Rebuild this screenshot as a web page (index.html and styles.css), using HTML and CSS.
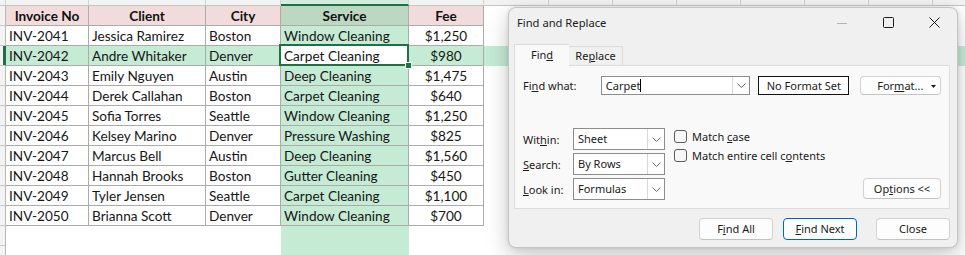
FILE: index.html
```html
<!DOCTYPE html>
<html>
<head>
<meta charset="utf-8">
<link rel="stylesheet" href="styles.css">
</head>
<body>
<div class="sheet">
  <div class="colhdr">
    <div class="ch g"></div>
    <div class="ch a"></div>
    <div class="ch b"></div>
    <div class="ch c3"></div>
    <div class="ch d sel"></div>
    <div class="ch e"></div>
    <div class="ch f"></div>
    <div class="ch x"></div>
    <div class="ch x"></div>
    <div class="ch x"></div>
    <div class="ch x"></div>
    <div class="ch x"></div>
    <div class="ch x"></div>
    <div class="ch x"></div>
  </div>
  <div class="row hdr">
    <div class="gut"></div>
    <div class="cell a ctr">Invoice No</div>
    <div class="cell b ctr">Client</div>
    <div class="cell c3 ctr">City</div>
    <div class="cell d ctr">Service</div>
    <div class="cell e ctr">Fee</div>
    <div class="rest"></div>
  </div>
  <div class="row">
    <div class="gut"></div>
    <div class="cell a">INV-2041</div>
    <div class="cell b">Jessica Ramirez</div>
    <div class="cell c3">Boston</div>
    <div class="cell d">Window Cleaning</div>
    <div class="cell e ctr">$1,250</div>
    <div class="rest"></div>
  </div>
  <div class="row hl">
    <div class="gut sel"></div>
    <div class="cell a">INV-2042</div>
    <div class="cell b">Andre Whitaker</div>
    <div class="cell c3">Denver</div>
    <div class="cell d active">Carpet Cleaning</div>
    <div class="cell e ctr">$980</div>
    <div class="rest"></div>
  </div>
  <div class="row">
    <div class="gut"></div>
    <div class="cell a">INV-2043</div>
    <div class="cell b">Emily Nguyen</div>
    <div class="cell c3">Austin</div>
    <div class="cell d">Deep Cleaning</div>
    <div class="cell e ctr">$1,475</div>
    <div class="rest"></div>
  </div>
  <div class="row">
    <div class="gut"></div>
    <div class="cell a">INV-2044</div>
    <div class="cell b">Derek Callahan</div>
    <div class="cell c3">Boston</div>
    <div class="cell d">Carpet Cleaning</div>
    <div class="cell e ctr">$640</div>
    <div class="rest"></div>
  </div>
  <div class="row">
    <div class="gut"></div>
    <div class="cell a">INV-2045</div>
    <div class="cell b">Sofia Torres</div>
    <div class="cell c3">Seattle</div>
    <div class="cell d">Window Cleaning</div>
    <div class="cell e ctr">$1,250</div>
    <div class="rest"></div>
  </div>
  <div class="row">
    <div class="gut"></div>
    <div class="cell a">INV-2046</div>
    <div class="cell b">Kelsey Marino</div>
    <div class="cell c3">Denver</div>
    <div class="cell d">Pressure Washing</div>
    <div class="cell e ctr">$825</div>
    <div class="rest"></div>
  </div>
  <div class="row">
    <div class="gut"></div>
    <div class="cell a">INV-2047</div>
    <div class="cell b">Marcus Bell</div>
    <div class="cell c3">Austin</div>
    <div class="cell d">Deep Cleaning</div>
    <div class="cell e ctr">$1,560</div>
    <div class="rest"></div>
  </div>
  <div class="row">
    <div class="gut"></div>
    <div class="cell a">INV-2048</div>
    <div class="cell b">Hannah Brooks</div>
    <div class="cell c3">Boston</div>
    <div class="cell d">Gutter Cleaning</div>
    <div class="cell e ctr">$450</div>
    <div class="rest"></div>
  </div>
  <div class="row">
    <div class="gut"></div>
    <div class="cell a">INV-2049</div>
    <div class="cell b">Tyler Jensen</div>
    <div class="cell c3">Seattle</div>
    <div class="cell d">Carpet Cleaning</div>
    <div class="cell e ctr">$1,100</div>
    <div class="rest"></div>
  </div>
  <div class="row">
    <div class="gut"></div>
    <div class="cell a">INV-2050</div>
    <div class="cell b">Brianna Scott</div>
    <div class="cell c3">Denver</div>
    <div class="cell d">Window Cleaning</div>
    <div class="cell e ctr">$700</div>
    <div class="rest"></div>
  </div>
  <div class="row empty">
    <div class="gut"></div>
    <div class="blank a"></div>
    <div class="blank b"></div>
    <div class="blank c3"></div>
    <div class="blank d"></div>
    <div class="blank e"></div>
    <div class="rest"></div>
  </div>
  <div class="row empty">
    <div class="gut"></div>
    <div class="blank a"></div>
    <div class="blank b"></div>
    <div class="blank c3"></div>
    <div class="blank d"></div>
    <div class="blank e"></div>
    <div class="rest"></div>
  </div>
</div>

<div class="dlg">
  <div class="titlebar">
    <span class="title">Find and Replace</span>
    <div class="wbtn"><svg width="10" height="10" viewBox="0 0 10 10"><path d="M0 5.5H10" stroke="#b4b4b4" stroke-width="1"/></svg></div>
    <div class="wbtn"><svg width="11" height="11" viewBox="0 0 11 11"><rect x="0.5" y="0.5" width="10" height="10" rx="1" fill="none" stroke="#1a1a1a" stroke-width="1"/></svg></div>
    <div class="wbtn"><svg width="11" height="11" viewBox="0 0 11 11"><path d="M0.5 0.5L10.5 10.5M10.5 0.5L0.5 10.5" stroke="#1a1a1a" stroke-width="1"/></svg></div>
  </div>
  <div class="content">
    <div class="tabs">
      <div class="tab on">Fin<u>d</u></div>
      <div class="tab">Re<u>p</u>lace</div>
    </div>
    <div class="panel">
      <div class="findrow">
        <span class="lbl fw">Fi<u>n</u>d what:</span>
        <div class="combo wide">
          <span class="val">Carpet<i class="caret"></i></span>
          <span class="dd"><svg width="9" height="5" viewBox="0 0 9 5"><path d="M0.5 0.5L4.5 4.5L8.5 0.5" fill="none" stroke="#6a6a6a" stroke-width="1"/></svg></span>
        </div>
        <div class="nofmt">No Format Set</div>
        <div class="btn fmt"><span class="fmttxt">For<u>m</u>at...</span><svg class="tri" width="5" height="3" viewBox="0 0 5 3"><path d="M0 0H5L2.5 3Z" fill="#1a1a1a"/></svg></div>
      </div>
      <div class="opts">
        <div class="sels">
          <div class="srow">
            <span class="lbl sl">Wit<u>h</u>in:</span>
            <div class="combo sm"><span class="val">Sheet</span><span class="dd"><svg width="9" height="5" viewBox="0 0 9 5"><path d="M0.5 0.5L4.5 4.5L8.5 0.5" fill="none" stroke="#6a6a6a" stroke-width="1"/></svg></span></div>
          </div>
          <div class="srow">
            <span class="lbl sl"><u>S</u>earch:</span>
            <div class="combo sm"><span class="val">By Rows</span><span class="dd"><svg width="9" height="5" viewBox="0 0 9 5"><path d="M0.5 0.5L4.5 4.5L8.5 0.5" fill="none" stroke="#6a6a6a" stroke-width="1"/></svg></span></div>
          </div>
          <div class="srow">
            <span class="lbl sl"><u>L</u>ook in:</span>
            <div class="combo sm"><span class="val">Formulas</span><span class="dd"><svg width="9" height="5" viewBox="0 0 9 5"><path d="M0.5 0.5L4.5 4.5L8.5 0.5" fill="none" stroke="#6a6a6a" stroke-width="1"/></svg></span></div>
          </div>
        </div>
        <div class="checks">
          <div class="chk"><span class="box"></span><span class="ctxt">Match <u>c</u>ase</span></div>
          <div class="chk"><span class="box"></span><span class="ctxt">Match entire cell c<u>o</u>ntents</span></div>
        </div>
        <div class="btn optbtn">Op<u>t</u>ions &lt;&lt;</div>
      </div>
    </div>
    <div class="btnrow">
      <div class="btn act">F<u>i</u>nd All</div>
      <div class="btn act primary"><u>F</u>ind Next</div>
      <div class="btn act closeb">Close</div>
    </div>
  </div>
</div>
</body>
</html>
```

FILE: styles.css
```css
html, body {
  margin: 0;
  padding: 0;
}
body {
  width: 965px;
  height: 255px;
  overflow: hidden;
  position: relative;
  background: #ffffff;
  font-family: Lato, "Liberation Sans", sans-serif;
}

/* ---------- sheet ---------- */
.sheet {
  display: flex;
  flex-direction: column;
}
.colhdr {
  display: flex;
  height: 6px;
  background: #f3f3f3;
}
.ch {
  box-sizing: border-box;
  flex: none;
  height: 6px;
  border-right: 1px solid #d2d2d2;
  border-bottom: 1px solid #c6c6c6;
}
.ch.g { width: 6px; }
.ch.sel {
  background: #d3eedf;
  border-bottom: 2px solid #1e7145;
}
.a { width: 83px; }
.b { width: 117px; }
.c3 { width: 75px; }
.d { width: 128px; }
.e { width: 75px; }
.ch.f { width: 65px; }
.ch.x { width: 64px; }

.row {
  display: flex;
  height: 20px;
}
.gut {
  flex: none;
  box-sizing: border-box;
  width: 6px;
  height: 20px;
  background: #f3f3f3;
  border-right: 1px solid #b8b8b8;
  border-bottom: 1px solid #c8c8c8;
}
.gut.sel {
  border-right-color: #1e7145;
  box-shadow: inset -2px 0 #1e7145;
}
.cell {
  flex: none;
  box-sizing: border-box;
  height: 20px;
  border-right: 1px solid #ababab;
  border-bottom: 1px solid #ababab;
  padding: 0 3px;
  font-size: 13.6px;
  line-height: 20px;
  color: #161616;
  white-space: nowrap;
  overflow: hidden;
}
.cell.ctr { text-align: center; }
.cell.d { background: #c6ebd5; }
.row.hdr .cell {
  background: #f2dcdb;
  font-weight: bold;
  color: #111;
}
.row.hdr .cell.d { background: #bcd8c3; }
.row.hl .cell,
.row.hl .rest { background: #c6ebd5; }
.row.hl .cell.active {
  background: #ffffff;
  position: relative;
  overflow: visible;
}
.cell.active::after {
  content: "";
  position: absolute;
  left: -2px;
  top: -2px;
  right: -1px;
  bottom: -1px;
  border: 2px solid #1e7145;
}
.cell.active::before {
  content: "";
  position: absolute;
  right: -4px;
  bottom: -4px;
  width: 5px;
  height: 5px;
  background: #1e7145;
  border: 1px solid #ffffff;
  z-index: 2;
}
.rest {
  flex: 1;
  height: 20px;
}
.blank {
  flex: none;
  height: 20px;
}
.blank.d { background: #c6ebd5; }

/* ---------- dialog ---------- */
.dlg {
  position: absolute;
  left: 508px;
  top: 7px;
  width: 450px;
  height: 241px;
  box-sizing: border-box;
  background: #f0f0f0;
  border: 1px solid #c4c4c4;
  border-radius: 8px;
  box-shadow: 0 8px 22px rgba(0, 0, 0, 0.22), 0 0 4px rgba(0, 0, 0, 0.12);
  font-family: "Noto Sans", sans-serif;
  font-size: 11px;
  color: #1a1a1a;
  display: flex;
  flex-direction: column;
}
.titlebar {
  display: flex;
  height: 29px;
  align-items: center;
}
.title {
  flex: 1;
  padding-left: 8px;
  font-size: 11.2px;
  line-height: 29px;
}
.wbtn {
  width: 46px;
  height: 29px;
  display: flex;
  align-items: center;
  justify-content: center;
}
.content {
  padding: 0 7px 0 5px;
}
.tabs {
  display: flex;
  margin-top: 7px;
  height: 21px;
  align-items: flex-end;
  position: relative;
  z-index: 1;
}
.tab {
  box-sizing: border-box;
  height: 19px;
  width: 54px;
  text-align: center;
  line-height: 18px;
  background: #f0f0f0;
  border-top: 1px solid #dcdcdc;
  border-right: 1px solid #dcdcdc;
}
.tab.on {
  width: 55px;
  height: 22px;
  margin-bottom: -1px;
  line-height: 20px;
  background: #f9f9f9;
  border-left: 1px solid #dcdcdc;
  border-right: none;
}
.panel {
  box-sizing: border-box;
  height: 144px;
  background: #f9f9f9;
  border: 1px solid #dcdcdc;
  padding: 10px 8px 8px 8px;
}
.findrow {
  display: flex;
  align-items: center;
  height: 19px;
}
.lbl.fw { width: 78px; }
.combo {
  box-sizing: border-box;
  display: flex;
  background: #ffffff;
  border: 1px solid #8d8d8d;
  height: 19px;
}
.combo .val {
  flex: 1;
  padding-left: 4px;
  line-height: 17px;
  white-space: nowrap;
}
.combo .dd {
  width: 16px;
  border-left: 1px solid #d8d8d8;
  display: flex;
  align-items: center;
  justify-content: center;
}
.combo.wide { width: 150px; }
.caret {
  display: inline-block;
  width: 1px;
  height: 13px;
  background: #000;
  vertical-align: -2px;
}
.nofmt {
  box-sizing: border-box;
  width: 91px;
  height: 19px;
  margin-left: 8px;
  border: 1px solid #111;
  background: #ffffff;
  text-align: center;
  line-height: 17px;
}
.btn {
  box-sizing: border-box;
  background: #fdfdfd;
  border: 1px solid #d2d2d2;
  border-bottom-color: #c2c2c2;
  border-radius: 4px;
  text-align: center;
  white-space: nowrap;
}
.btn.fmt {
  width: 81px;
  height: 19px;
  margin-left: 11px;
  line-height: 17px;
  position: relative;
  text-align: left;
  padding-left: 16px;
}
.tri {
  position: absolute;
  right: 4px;
  top: 8px;
}
.opts {
  display: flex;
  margin-top: 33px;
}
.sels {
  display: flex;
  flex-direction: column;
  gap: 3px;
}
.srow {
  display: flex;
  align-items: center;
  height: 22px;
}
.lbl.sl { width: 50px; }
.combo.sm {
  width: 92px;
  height: 22px;
}
.combo.sm .val { line-height: 20px; padding-left: 4px; }
.checks {
  margin-left: 9px;
  margin-top: -1px;
  display: flex;
  flex-direction: column;
  gap: 1px;
}
.chk {
  display: flex;
  align-items: center;
  height: 18px;
}
.ctxt { white-space: pre; }
.box {
  box-sizing: border-box;
  width: 13px;
  height: 13px;
  border: 1px solid #5c5c5c;
  border-radius: 3px;
  background: #f7f7f7;
  margin-right: 5px;
}
.btn.optbtn {
  width: 78px;
  height: 21px;
  line-height: 19px;
  margin-left: auto;
  align-self: flex-end;
  margin-bottom: 1px;
}
.btnrow {
  display: flex;
  justify-content: flex-end;
  margin-top: 9px;
}
.btn.act {
  width: 74px;
  height: 22px;
  line-height: 20px;
}
.btn.primary {
  margin-left: 10px;
  border-color: #0067c0;
}
.btn.closeb { margin-left: 19px; }
```
